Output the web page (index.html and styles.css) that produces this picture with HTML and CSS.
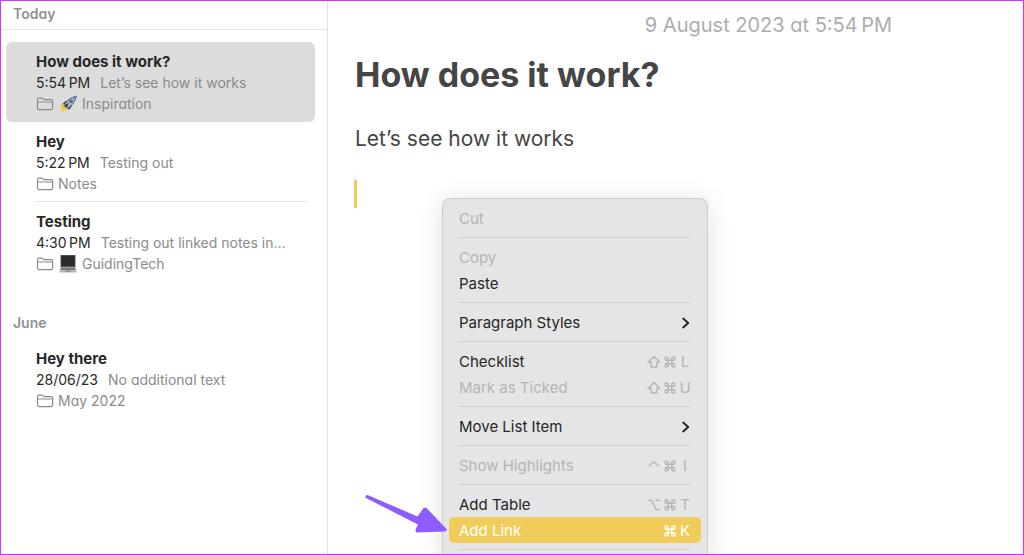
FILE: index.html
```html
<!DOCTYPE html>
<html lang="en">
<head>
<meta charset="utf-8">
<title>Notes</title>
<link rel="stylesheet" href="styles.css">
</head>
<body>
<svg class="sprite" aria-hidden="true">
  <symbol id="folder" viewBox="0 0 18 14"><path d="M1.500 11V2.800Q1.500 1.200 3.100 1.200h2.600q.7 0 1.200.5l.5.5q.4.4 1 .4h6.600Q16.600 2.600 16.600 4.200v6.800Q16.600 12.600 15 12.600H3.100Q1.500 12.600 1.500 11zM1.500 5h15" fill="none" stroke="currentColor" stroke-width="1.200"/></symbol>
  <symbol id="command" viewBox="0 0 14 14"><path d="M5.200 5.200H3.600A1.600 1.600 0 1 1 5.200 3.600v6.800A1.600 1.600 0 1 1 3.600 8.800h6.800A1.600 1.600 0 1 1 8.800 10.400V3.600A1.600 1.600 0 1 1 10.400 5.200z" fill="none" stroke="currentColor" stroke-width="1.400"/></symbol>
  <symbol id="shift" viewBox="0 0 14 14"><path d="M7 1.600L12.700 7.400H9.800V12H4.200V7.400H1.300z" fill="none" stroke="currentColor" stroke-width="1.400" stroke-linejoin="round"/></symbol>
  <symbol id="control" viewBox="0 0 14 14"><path d="M2 7.200L7 2.600L12 7.200" fill="none" stroke="currentColor" stroke-width="1.400"/></symbol>
  <symbol id="option" viewBox="0 0 14 14"><path d="M1 2.400H4.600L9.400 11.600H13M8.400 2.400H13" fill="none" stroke="currentColor" stroke-width="1.400"/></symbol>
  <symbol id="chevron" viewBox="0 0 10 14"><path d="M2.200 2.600L7.200 7L2.200 11.400" fill="none" stroke="currentColor" stroke-width="2" stroke-linecap="round" stroke-linejoin="round"/></symbol>
</svg>
<div class="window">
  <aside class="sidebar">
    <h2 class="group group-top">Today</h2>
    <ul class="notes">
      <li class="note selected">
        <h3 class="note-title">How does it work?</h3>
        <p class="note-line"><time>5:54&#8239;PM</time><span class="excerpt">Let’s see how it works</span></p>
        <p class="note-folder"><svg class="folder"><use href="#folder"/></svg>
          <svg class="emoji" viewBox="0 0 18 18" role="img" aria-label="Rocket">
            <path d="M1 10L7 9L9 12L7 17L5.500 14.500L3.500 17L3 14.500L.5 15L2.500 12.500z" fill="#f2c94c"/>
            <path d="M5 9.500L9 5.500L6.500 6L3.500 9zM9 13.500L13 9.500L12.500 12L9.500 15z" fill="#39414a"/>
            <path d="M5 10.500Q8 3.500 17.500 1Q15 10.500 8 13.500z" fill="#a9b0b8" stroke="#4b5159" stroke-width=".8"/>
            <path d="M14 2.300L17.800.7L16.500 4.500z" fill="#4c83ba"/>
            <circle cx="12" cy="6.300" r="1.800" fill="#3f75aa"/>
            <path d="M5.500 10.500L9.500 8L7.800 12.500z" fill="#262a30"/>
          </svg><span>Inspiration</span></p>
      </li>
      <li class="note">
        <h3 class="note-title">Hey</h3>
        <p class="note-line"><time>5:22&#8239;PM</time><span class="excerpt">Testing out</span></p>
        <p class="note-folder"><svg class="folder"><use href="#folder"/></svg><span>Notes</span></p>
      </li>
      <li class="note">
        <h3 class="note-title">Testing</h3>
        <p class="note-line"><time>4:30&#8239;PM</time><span class="excerpt">Testing out linked notes in…</span></p>
        <p class="note-folder"><svg class="folder"><use href="#folder"/></svg>
          <svg class="emoji" viewBox="0 0 18 18" role="img" aria-label="Laptop">
            <path d="M1.500 0H16.500V12H1.500z" fill="#55585b"/>
            <path d="M2.300.8H15.700V11H2.300z" fill="#292a2c"/>
            <path d="M1.500 12H16.500L17.800 17.500H.2z" fill="#b3b5b7"/>
            <path d="M2.500 12.500H15.500L16.200 15H1.800z" fill="#77797c"/>
            <path d="M6.800 15.500H11.200L11.500 17H6.500z" fill="#8f9193"/>
          </svg><span>GuidingTech</span></p>
      </li>
    </ul>
    <h2 class="group">June</h2>
    <ul class="notes notes-june">
      <li class="note">
        <h3 class="note-title">Hey there</h3>
        <p class="note-line"><time>28/06/23</time><span class="excerpt">No additional text</span></p>
        <p class="note-folder"><svg class="folder"><use href="#folder"/></svg><span>May 2022</span></p>
      </li>
    </ul>
  </aside>
  <main class="editor">
    <p class="date">9 August 2023 at 5:54&#8239;PM</p>
    <h1 class="title">How does it work?</h1>
    <p class="body">Let’s see how it works</p>
    <div class="caret"></div>
  </main>
  <div class="menu" role="menu">
    <button class="item" role="menuitem" disabled>Cut</button>
    <hr class="rule">
    <button class="item" role="menuitem" disabled>Copy</button>
    <button class="item" role="menuitem">Paste</button>
    <hr class="rule">
    <button class="item" role="menuitem">Paragraph Styles<svg class="chevron"><use href="#chevron"/></svg></button>
    <hr class="rule">
    <button class="item" role="menuitem">Checklist<span class="keys"><svg class="key"><use href="#shift"/></svg><svg class="key"><use href="#command"/></svg><kbd>L</kbd></span></button>
    <button class="item" role="menuitem" disabled>Mark as Ticked<span class="keys"><svg class="key"><use href="#shift"/></svg><svg class="key"><use href="#command"/></svg><kbd>U</kbd></span></button>
    <hr class="rule">
    <button class="item" role="menuitem">Move List Item<svg class="chevron"><use href="#chevron"/></svg></button>
    <hr class="rule">
    <button class="item" role="menuitem" disabled>Show Highlights<span class="keys"><svg class="key"><use href="#control"/></svg><svg class="key"><use href="#command"/></svg><kbd>I</kbd></span></button>
    <hr class="rule">
    <button class="item" role="menuitem">Add Table<span class="keys"><svg class="key"><use href="#option"/></svg><svg class="key"><use href="#command"/></svg><kbd>T</kbd></span></button>
    <button class="item active" role="menuitem">Add Link<span class="keys"><svg class="key"><use href="#command"/></svg><kbd>K</kbd></span></button>
    <hr class="rule">
  </div>
  <svg class="arrow" viewBox="0 0 84 42" aria-hidden="true"><path d="M3.500 1L53.500 22.500L59.500 14L62 13.500L83 35.500L81.500 37.500L52 38.500L51.500 35.500L54 30.500L2 4Q0 1.500 3.500 1z" fill="#8d5cff"/></svg>
</div>
</body>
</html>
```
FILE: styles.css
```css
* {
  box-sizing: border-box;
}

body,
h1,
h2,
h3,
p,
ul {
  margin: 0;
  padding: 0;
}

body {
  font-family: Inter, "Liberation Sans", sans-serif;
  color: #282828;
  background: #fff;
}

.sprite {
  display: none;
}

.window {
  position: relative;
  display: flex;
  height: 100vh;
  overflow: hidden;
  border: 1px solid #d633ff;
}

/* Note list */
.sidebar {
  flex: 0 0 327px;
  border-right: 1px solid #e3e3e3;
  font-size: 14px;
  font-feature-settings: "cv11";
}

.group {
  margin-top: 30px;
  padding-left: 12px;
  font-size: 14px;
  font-weight: 600;
  line-height: 22px;
  color: #929292;
}

.group-top {
  margin-top: 0;
  padding-top: 2px;
  padding-bottom: 4px;
  border-bottom: 1px solid #e6e6e6;
}

.notes {
  padding: 12px 12px 0 5px;
  list-style: none;
}

.notes-june {
  padding-top: 5px;
}

.note {
  padding: 9px 8px 7px 30px;
  border-radius: 6px;
}

.note.selected {
  background: #dcdcdc;
}

.note:not(.selected) + .note {
  position: relative;
}

.note:not(.selected) + .note::before {
  content: "";
  position: absolute;
  top: -1px;
  left: 30px;
  right: 8px;
  height: 1px;
  background: #e3e3e3;
}

.note-title {
  font-size: 15px;
  font-weight: 700;
  line-height: 22px;
}

.note-line {
  display: flex;
  gap: 10px;
  line-height: 20px;
  white-space: nowrap;
}

.excerpt,
.note-folder {
  color: #8b8b8b;
}

.note-folder {
  display: flex;
  align-items: center;
  gap: 4px;
  line-height: 22px;
}

.folder {
  width: 18px;
  height: 14px;
}

.emoji {
  width: 20px;
  height: 18px;
}

/* Editor */
.editor {
  flex: 1;
  min-width: 0;
  padding: 8px 0 0 26px;
  color: #454545;
}

.date {
  padding-left: 160px;
  font-size: 20px;
  line-height: 32px;
  text-align: center;
  color: #adadad;
  font-feature-settings: "cv11";
}

.title {
  margin-top: 12px;
  padding-left: 1px;
  font-size: 34px;
  line-height: 44px;
}

.body {
  margin-top: 26px;
  padding-left: 1px;
  font-size: 21px;
  line-height: 32px;
}

.caret {
  width: 3px;
  height: 28px;
  margin-top: 25px;
  background: #f0cd5b;
}

/* Context menu */
.menu {
  position: absolute;
  top: 197px;
  left: 441px;
  width: 266px;
  padding: 6px;
  border: 1px solid #cfcfcf;
  border-radius: 8px;
  background: #e5e5e5;
  box-shadow: 0 4px 24px rgba(60, 60, 30, 0.16);
}

.item {
  display: flex;
  align-items: center;
  justify-content: space-between;
  width: 100%;
  height: 26px;
  padding: 2px 10px 0;
  border: 0;
  border-radius: 5px;
  background: none;
  font: 15px/24px Inter, "Liberation Sans", sans-serif;
  color: #262626;
}

.item:disabled {
  color: #b5b5b5;
}

.rule {
  height: 1px;
  margin: 6px 11px 6px 10px;
  border: 0;
  background: #cecece;
}

.keys {
  display: flex;
  align-items: center;
  gap: 2px;
  color: #b5b5b5;
}

.key {
  width: 14px;
  height: 14px;
}

kbd {
  width: 12px;
  font: inherit;
  text-align: center;
}

.chevron {
  width: 10px;
  height: 14px;
}

.item.active {
  background: #f0cd5b;
}

.item.active,
.item.active .keys {
  color: #fff;
}

.arrow {
  position: absolute;
  top: 493px;
  left: 363px;
  width: 84px;
  height: 42px;
}
```
